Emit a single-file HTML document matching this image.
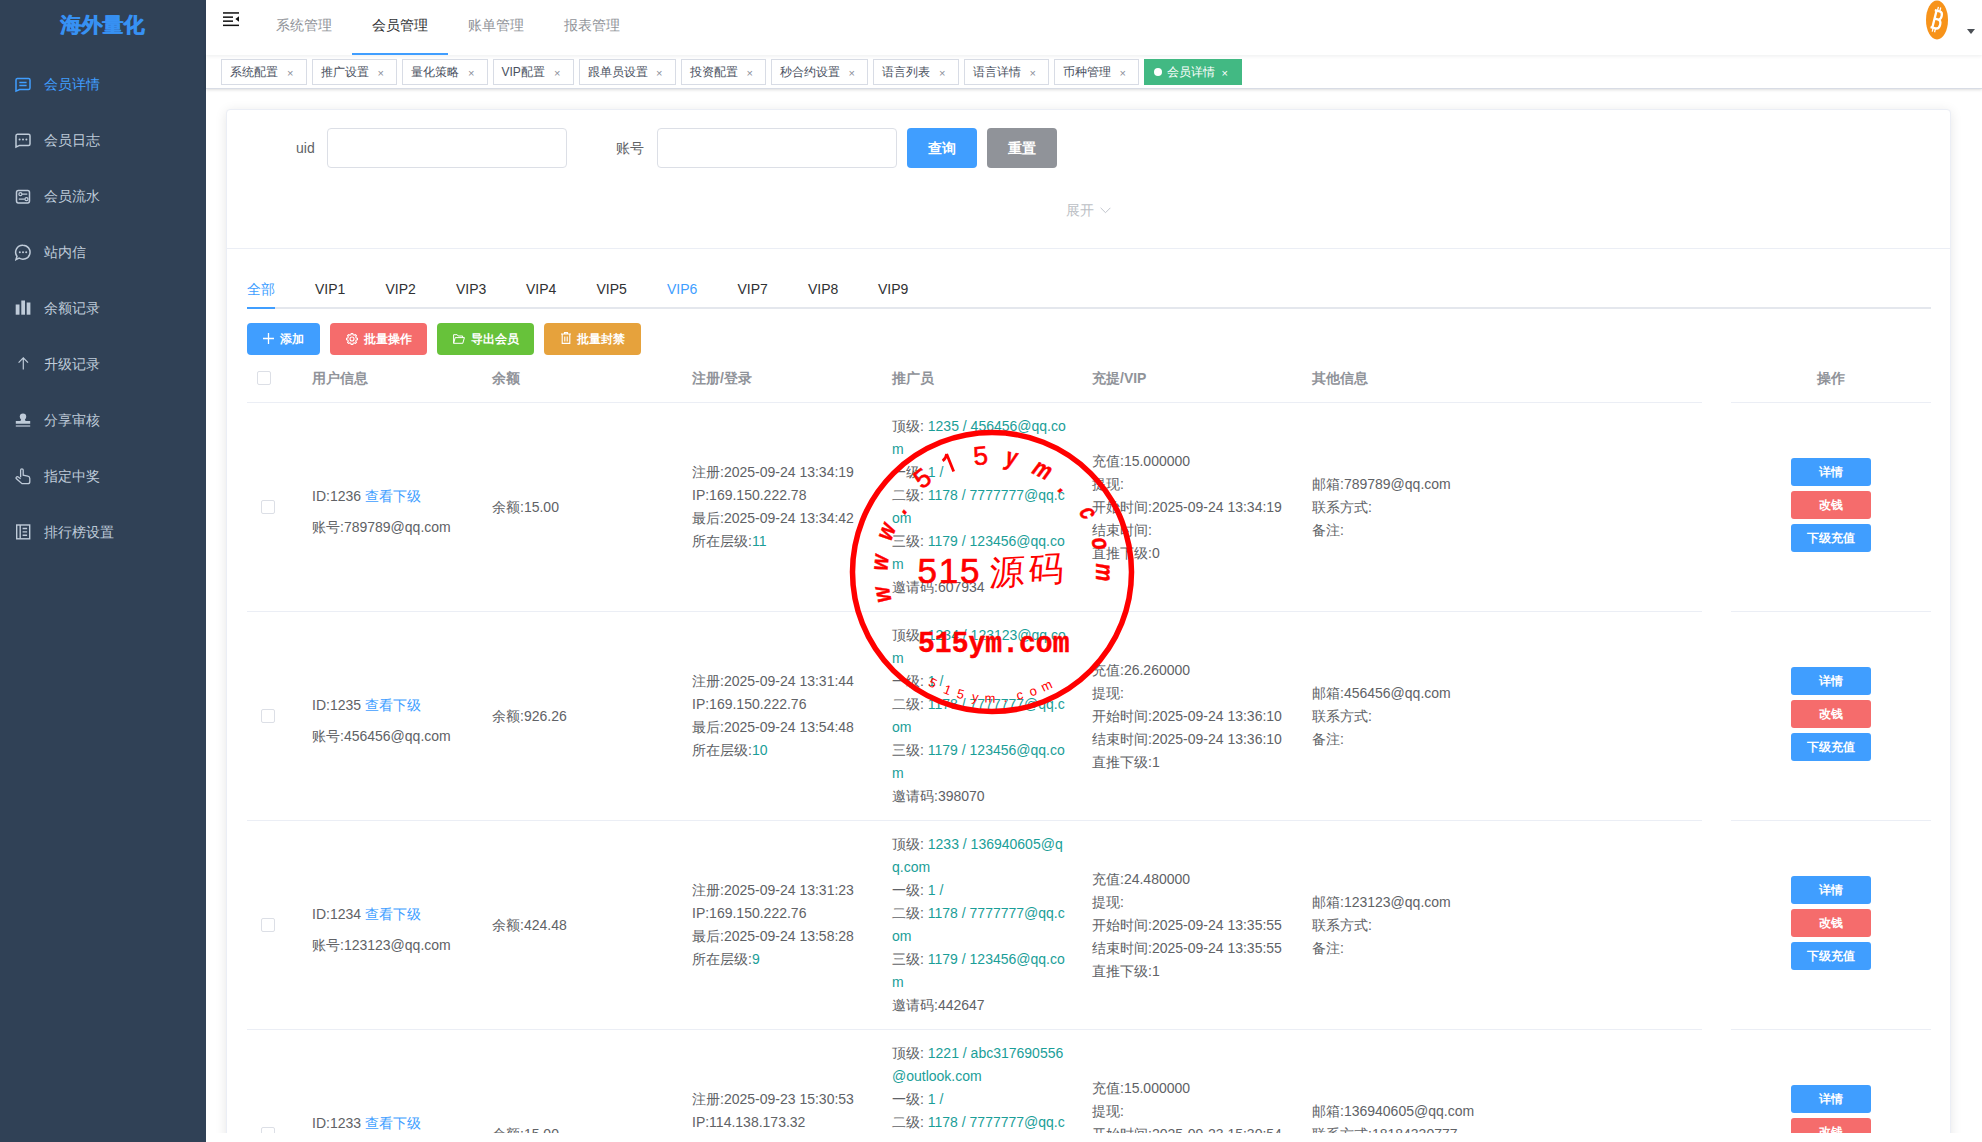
<!DOCTYPE html><html><head><meta charset="utf-8"><style>
*{box-sizing:border-box;margin:0;padding:0}
html,body{width:1982px;height:1142px;overflow:hidden;background:#fff;font-family:"Liberation Sans",sans-serif;color:#606266;font-size:14px}
.abs{position:absolute}
#side{position:absolute;left:0;top:0;width:206px;height:1142px;background:#304156}
.logo{position:absolute;left:-1px;width:206px;top:11px;text-align:center;color:#3791f3;font-size:21px;font-weight:bold;line-height:28px;text-shadow:0.6px 0 0 #3791f3}
.mi{position:absolute;left:0;width:206px;height:56px;color:#bfcbd9;font-size:14px}
.mi .t{position:absolute;left:44px;top:0;line-height:56px;white-space:nowrap}
.mi svg{position:absolute;left:0;top:0}
.mi.act{color:#409EFF}
#hdr{position:absolute;left:206px;top:0;right:0;height:55px;background:#fff;z-index:3;box-shadow:0 1px 4px rgba(0,21,41,.08)}
.nav{position:absolute;top:0;height:55px;line-height:50px;font-size:14px;color:#909399;white-space:nowrap}
.nav.act{color:#303133}
#tags{position:absolute;left:206px;top:55px;right:0;height:34px;background:#fff;border-bottom:1px solid #d8dce5;z-index:2;box-shadow:0 1px 3px 0 rgba(0,0,0,.12),0 0 3px 0 rgba(0,0,0,.04)}
.tag{position:absolute;top:4px;height:26px;line-height:25px;border:1px solid #d8dce5;color:#495060;background:#fff;font-size:12px;padding-left:8px;white-space:nowrap}
.tag .x{position:absolute;top:1px;font-size:11px;color:#8a8f99}
.tag.act{background:#42b983;border-color:#42b983;color:#fff}
.tag.act .x{color:#fff}
#main{position:absolute;left:206px;top:89px;width:1776px;height:1044px;overflow:hidden;background:#fff}
#card{position:absolute;left:20px;top:20px;width:1725px;height:1200px;border:1px solid #ebeef5;border-radius:4px;background:#fff;box-shadow:0 2px 12px 0 rgba(0,0,0,.1)}
.lbl{position:absolute;font-size:14px;color:#606266;line-height:40px;white-space:nowrap}
.inp{position:absolute;height:40px;width:240px;border:1px solid #dcdfe6;border-radius:4px;background:#fff}
.btn{position:absolute;color:#fff;text-align:center;border-radius:4px;white-space:nowrap}
.tab{position:absolute;font-size:14px;color:#303133;line-height:40px;white-space:nowrap}
.th{position:absolute;font-size:14px;font-weight:bold;color:#909399;line-height:23px;white-space:nowrap}
.cell{position:absolute;font-size:14px;color:#606266;line-height:23px;white-space:nowrap}
.tl{color:#1a9e98}
.lk{color:#409EFF}
.hl{position:absolute;height:1px;background:#ebeef5}
.cb{position:absolute;width:14px;height:14px;border:1px solid #dcdfe6;border-radius:2px;background:#fff}
.ob{position:absolute;width:80px;height:28px;line-height:28px;font-size:12px;font-weight:bold;color:#fff;text-align:center;border-radius:3px}
</style></head><body>
<div id="side"><div class="logo">海外量化</div>
<div class="mi act" style="top:56px"><svg width="40" height="56" viewBox="0 0 40 56"><path d="M17.3 22.4h11.2a1.5 1.5 0 0 1 1.5 1.5v8.2a1.5 1.5 0 0 1-1.5 1.5H19.6L16 35.2V23.9a1.5 1.5 0 0 1 1.3-1.5z" fill="none" stroke="currentColor" stroke-width="1.5"/><path d="M19.3 26.4h7.3M19.3 29.6h7.3" stroke="currentColor" stroke-width="1.5"/></svg><span class="t">会员详情</span></div>
<div class="mi" style="top:112px"><svg width="40" height="56" viewBox="0 0 40 56"><path d="M17.3 22.2h11.2a1.5 1.5 0 0 1 1.5 1.5v8.2a1.5 1.5 0 0 1-1.5 1.5H19.6L16 35V23.7a1.5 1.5 0 0 1 1.3-1.5z" fill="none" stroke="currentColor" stroke-width="1.5"/><circle cx="19.6" cy="27.6" r="1" fill="currentColor"/><circle cx="23" cy="27.6" r="1" fill="currentColor"/><circle cx="26.4" cy="27.6" r="1" fill="currentColor"/></svg><span class="t">会员日志</span></div>
<div class="mi" style="top:168px"><svg width="40" height="56" viewBox="0 0 40 56"><rect x="16.5" y="22.6" width="13" height="12.3" rx="1.8" fill="none" stroke="currentColor" stroke-width="1.5"/><circle cx="20.4" cy="26.2" r="1.5" fill="none" stroke="currentColor" stroke-width="1.3"/><path d="M22 26.2h5.3M18.8 31.2h6" stroke="currentColor" stroke-width="1.3"/><circle cx="26.5" cy="31.2" r="1.5" fill="none" stroke="currentColor" stroke-width="1.3"/></svg><span class="t">会员流水</span></div>
<div class="mi" style="top:224px"><svg width="40" height="56" viewBox="0 0 40 56"><path d="M23 21.2a7 7 0 1 1-3.9 12.8L16 35.6l1-3.3A7 7 0 0 1 23 21.2z" fill="none" stroke="currentColor" stroke-width="1.5"/><circle cx="19.8" cy="28.2" r="1" fill="currentColor"/><circle cx="23" cy="28.2" r="1" fill="currentColor"/><circle cx="26.2" cy="28.2" r="1" fill="currentColor"/></svg><span class="t">站内信</span></div>
<div class="mi" style="top:280px"><svg width="40" height="56" viewBox="0 0 40 56"><rect x="15.7" y="24.5" width="3.8" height="10.2" fill="currentColor"/><rect x="21.3" y="20.5" width="3.7" height="14.2" fill="currentColor"/><rect x="26.7" y="22.5" width="3.7" height="12.2" fill="currentColor"/></svg><span class="t">余额记录</span></div>
<div class="mi" style="top:336px"><svg width="40" height="56" viewBox="0 0 40 56"><path d="M23.3 22v11.6M18.6 26.6l4.7-4.7 4.7 4.7" fill="none" stroke="currentColor" stroke-width="1.2"/></svg><span class="t">升级记录</span></div>
<div class="mi" style="top:392px"><svg width="40" height="56" viewBox="0 0 40 56"><circle cx="23" cy="24.6" r="3.2" fill="currentColor"/><path d="M21.3 26.5h3.4l0.8 2.6h4.7v2.7H15.8v-2.7h4.7z" fill="currentColor"/><rect x="15.8" y="33.4" width="14.4" height="1.2" fill="currentColor"/></svg><span class="t">分享审核</span></div>
<div class="mi" style="top:448px"><svg width="40" height="56" viewBox="0 0 40 56"><path d="M20.6 29.2V22.2a1.3 1.3 0 0 1 2.6 0V27.2l4.6 1c1.2.3 2 1.1 2 2.3v3.2a2 2 0 0 1-2 2H22L16.2 30.6a1.3 1.3 0 0 1 1.7-1.8l2.7 1.9" fill="none" stroke="currentColor" stroke-width="1.3"/></svg><span class="t">指定中奖</span></div>
<div class="mi" style="top:504px"><svg width="40" height="56" viewBox="0 0 40 56"><rect x="16.7" y="21" width="13" height="13.8" fill="none" stroke="currentColor" stroke-width="1.4"/><path d="M20.2 21v13.8M22.6 24.5h4.5M22.6 27.9h4.5M22.6 31.3h4.5" stroke="currentColor" stroke-width="1.4"/></svg><span class="t">排行榜设置</span></div>
</div>
<div id="hdr">
<svg class="abs" style="left:17px;top:12px" width="16" height="15" viewBox="0 0 16 15" fill="#111"><rect x="0" y="0.2" width="16" height="1.5"/><rect x="0" y="4.4" width="10" height="1.5"/><rect x="0" y="8.4" width="10" height="1.5"/><rect x="0" y="12.6" width="16" height="1.5"/><path d="M16 4.2v5.6l-3.6-2.8z"/></svg>
<div class="nav" style="left:70px">系统管理</div>
<div class="nav act" style="left:166px">会员管理</div>
<div class="nav" style="left:262px">账单管理</div>
<div class="nav" style="left:358px">报表管理</div>
<div class="abs" style="left:146px;top:53px;width:96px;height:2px;background:#409EFF"></div>
<svg class="abs" style="left:1720px;top:0px" width="22" height="40" viewBox="0 0 22 40"><ellipse cx="11" cy="20" rx="11" ry="19.5" fill="#f7931a"/><g transform="rotate(14 11 20)" fill="none" stroke="#fff"><path d="M6.5 11H11.5Q14.6 11 14.6 15Q14.6 19.3 11.5 19.3H7.5M11.5 19.3Q15.2 19.3 15.2 23.8Q15.2 28.5 11.5 28.5H6.5M8.3 11V28.5" stroke-width="2.3"/><path d="M9.2 7V11M11.6 7V11M9.2 28.5V32.5M11.6 28.5V32.5" stroke-width="1.3"/></g></svg>
<svg class="abs" style="left:1761px;top:29px" width="8" height="5" viewBox="0 0 8 5"><path d="M0 0h8L4 5z" fill="#4b4f55"/></svg>
</div>
<div id="tags">
<div class="tag" style="left:15px;width:85.5px">系统配置<span class="x" style="right:12px">×</span></div>
<div class="tag" style="left:105.5px;width:85.5px">推广设置<span class="x" style="right:12px">×</span></div>
<div class="tag" style="left:196px;width:85.5px">量化策略<span class="x" style="right:12px">×</span></div>
<div class="tag" style="left:286.5px;width:81px">VIP配置<span class="x" style="right:12px">×</span></div>
<div class="tag" style="left:372.5px;width:97px">跟单员设置<span class="x" style="right:12px">×</span></div>
<div class="tag" style="left:474.5px;width:85.5px">投资配置<span class="x" style="right:12px">×</span></div>
<div class="tag" style="left:565px;width:97px">秒合约设置<span class="x" style="right:12px">×</span></div>
<div class="tag" style="left:667px;width:85.5px">语言列表<span class="x" style="right:12px">×</span></div>
<div class="tag" style="left:757.5px;width:85.5px">语言详情<span class="x" style="right:12px">×</span></div>
<div class="tag" style="left:847.5px;width:85.5px">币种管理<span class="x" style="right:12px">×</span></div>
<div class="tag act" style="left:938px;width:98px;padding-left:9px"><span style="display:inline-block;width:8px;height:8px;border-radius:50%;background:#fff;margin-right:5px;vertical-align:0px"></span>会员详情<span class="x" style="right:13px">×</span></div>
</div>
<div id="main">
<div id="card"></div>
<div class="hl" style="left:21px;top:159px;width:1723px"></div>
<div class="lbl" style="left:90px;top:39px">uid</div>
<div class="inp" style="left:121px;top:39px"></div>
<div class="lbl" style="left:410px;top:39px">账号</div>
<div class="inp" style="left:451px;top:39px"></div>
<div class="btn" style="left:701px;top:39px;width:70px;height:40px;line-height:40px;background:#409EFF;font-size:14px;font-weight:bold">查询</div>
<div class="btn" style="left:781px;top:39px;width:70px;height:40px;line-height:40px;background:#909399;font-size:14px;font-weight:bold">重置</div>
<div class="lbl" style="left:860px;top:101px;color:#bcbfc5;font-size:14px">展开<svg style="position:absolute;left:33.5px;top:16.5px" width="11" height="7" viewBox="0 0 11 7"><path d="M0.6 0.8l4.9 4.9 4.9-4.9" fill="none" stroke="#c0c4cc" stroke-width="1"/></svg></div>
<div class="tab" style="left:41px;top:180px;color:#409EFF">全部</div>
<div class="tab" style="left:109px;top:180px;color:#303133">VIP1</div>
<div class="tab" style="left:179.5px;top:180px;color:#303133">VIP2</div>
<div class="tab" style="left:250px;top:180px;color:#303133">VIP3</div>
<div class="tab" style="left:320px;top:180px;color:#303133">VIP4</div>
<div class="tab" style="left:390.5px;top:180px;color:#303133">VIP5</div>
<div class="tab" style="left:461px;top:180px;color:#409EFF">VIP6</div>
<div class="tab" style="left:531.5px;top:180px;color:#303133">VIP7</div>
<div class="tab" style="left:602px;top:180px;color:#303133">VIP8</div>
<div class="tab" style="left:672px;top:180px;color:#303133">VIP9</div>
<div class="abs" style="left:41px;top:218px;width:1684px;height:2px;background:#e4e7ed"></div>
<div class="abs" style="left:41px;top:218px;width:28px;height:2px;background:#409EFF"></div>
<div class="btn" style="left:41px;top:234px;width:73px;height:32px;line-height:32px;background:#409EFF;font-size:12px;font-weight:bold"><svg width="11" height="11" viewBox="0 0 11 11" style="vertical-align:-1px;margin-right:6px"><path d="M5.5 0v11M0 5.5h11" stroke="#fff" stroke-width="1.3"/></svg>添加</div>
<div class="btn" style="left:124px;top:234px;width:97px;height:32px;line-height:32px;background:#F56C6C;font-size:12px;font-weight:bold"><svg width="12" height="12" viewBox="0 0 12 12" style="vertical-align:-1.5px;margin-right:6px"><path d="M10.16 4.93 L11.54 5.21 L11.54 6.79 L10.16 7.07 L9.70 8.19 L10.48 9.36 L9.36 10.48 L8.19 9.70 L7.07 10.16 L6.79 11.54 L5.21 11.54 L4.93 10.16 L3.81 9.70 L2.64 10.48 L1.52 9.36 L2.30 8.19 L1.84 7.07 L0.46 6.79 L0.46 5.21 L1.84 4.93 L2.30 3.81 L1.52 2.64 L2.64 1.52 L3.81 2.30 L4.93 1.84 L5.21 0.46 L6.79 0.46 L7.07 1.84 L8.19 2.30 L9.36 1.52 L10.48 2.64 L9.70 3.81z" fill="none" stroke="#fff" stroke-width="1.1" stroke-linejoin="round"/><circle cx="6" cy="6" r="2" fill="none" stroke="#fff" stroke-width="1.1"/></svg>批量操作</div>
<div class="btn" style="left:231px;top:234px;width:97px;height:32px;line-height:32px;background:#67C23A;font-size:12px;font-weight:bold"><svg width="12" height="10" viewBox="0 0 12 10" style="vertical-align:-1px;margin-right:6px"><path d="M0.6 9.3V0.7h3.6l1 1.3h4.4v1.6M0.6 9.3h9.2l1.6-5.7H2.2L0.6 9.3" fill="none" stroke="#fff" stroke-width="1" stroke-linejoin="round"/></svg>导出会员</div>
<div class="btn" style="left:338px;top:234px;width:97px;height:32px;line-height:32px;background:#E6A23C;font-size:12px;font-weight:bold"><svg width="10" height="12" viewBox="0 0 10 12" style="vertical-align:-1px;margin-right:6px"><path d="M0 2h10M3.5 2V0.6h3V2M1.2 2v9.4h7.6V2M3.8 4.5v5M6.2 4.5v5" fill="none" stroke="#fff" stroke-width="1.1"/></svg>批量封禁</div>
<div class="cb" style="left:51px;top:282px"></div>
<div class="th" style="left:106px;top:277.5px">用户信息</div>
<div class="th" style="left:286px;top:277.5px">余额</div>
<div class="th" style="left:486px;top:277.5px">注册/登录</div>
<div class="th" style="left:686px;top:277.5px">推广员</div>
<div class="th" style="left:886px;top:277.5px">充提/VIP</div>
<div class="th" style="left:1106px;top:277.5px">其他信息</div>
<div class="th" style="left:1525px;width:200px;text-align:center;top:277.5px">操作</div>
<div class="hl" style="left:41px;top:313px;width:1455px"></div>
<div class="hl" style="left:1525px;top:313px;width:200px"></div>
<div class="hl" style="left:41px;top:522px;width:1455px"></div>
<div class="hl" style="left:1525px;top:522px;width:200px"></div>
<div class="cb" style="left:55px;top:411px"></div>
<div class="cell" style="left:106px;top:395.8px">ID:1236 <span class="lk">查看下级</span></div>
<div class="cell" style="left:106px;top:426.70000000000005px">账号:789789@qq.com</div>
<div class="cell" style="left:286px;top:406.5px">余额:15.00</div>
<div class="cell" style="left:486px;top:372.3px">注册:2025-09-24 13:34:19<br>IP:169.150.222.78<br>最后:2025-09-24 13:34:42<br>所在层级:<span class="tl">11</span></div>
<div class="cell" style="left:686px;top:325.5px">顶级: <span class="tl">1235 / 456456@qq.co</span><br><span class="tl">m</span><br>一级: <span class="tl">1 /</span><br>二级: <span class="tl">1178 / 7777777@qq.c</span><br><span class="tl">om</span><br>三级: <span class="tl">1179 / 123456@qq.co</span><br><span class="tl">m</span><br>邀请码:607934</div>
<div class="cell" style="left:886px;top:360.5px">充值:15.000000<br>提现:<br>开始时间:2025-09-24 13:34:19<br>结束时间:<br>直推下级:0</div>
<div class="cell" style="left:1106px;top:383.5px">邮箱:789789@qq.com<br>联系方式:<br>备注:</div>
<div class="ob" style="left:1585px;top:369px;background:#409EFF">详情</div>
<div class="ob" style="left:1585px;top:402px;background:#F56C6C">改钱</div>
<div class="ob" style="left:1585px;top:435px;background:#409EFF">下级充值</div>
<div class="hl" style="left:41px;top:731px;width:1455px"></div>
<div class="hl" style="left:1525px;top:731px;width:200px"></div>
<div class="cb" style="left:55px;top:620px"></div>
<div class="cell" style="left:106px;top:604.8px">ID:1235 <span class="lk">查看下级</span></div>
<div class="cell" style="left:106px;top:635.7px">账号:456456@qq.com</div>
<div class="cell" style="left:286px;top:615.5px">余额:926.26</div>
<div class="cell" style="left:486px;top:581.3px">注册:2025-09-24 13:31:44<br>IP:169.150.222.76<br>最后:2025-09-24 13:54:48<br>所在层级:<span class="tl">10</span></div>
<div class="cell" style="left:686px;top:534.5px">顶级: <span class="tl">1234 / 123123@qq.co</span><br><span class="tl">m</span><br>一级: <span class="tl">1 /</span><br>二级: <span class="tl">1178 / 7777777@qq.c</span><br><span class="tl">om</span><br>三级: <span class="tl">1179 / 123456@qq.co</span><br><span class="tl">m</span><br>邀请码:398070</div>
<div class="cell" style="left:886px;top:569.5px">充值:26.260000<br>提现:<br>开始时间:2025-09-24 13:36:10<br>结束时间:2025-09-24 13:36:10<br>直推下级:1</div>
<div class="cell" style="left:1106px;top:592.5px">邮箱:456456@qq.com<br>联系方式:<br>备注:</div>
<div class="ob" style="left:1585px;top:578px;background:#409EFF">详情</div>
<div class="ob" style="left:1585px;top:611px;background:#F56C6C">改钱</div>
<div class="ob" style="left:1585px;top:644px;background:#409EFF">下级充值</div>
<div class="hl" style="left:41px;top:940px;width:1455px"></div>
<div class="hl" style="left:1525px;top:940px;width:200px"></div>
<div class="cb" style="left:55px;top:829px"></div>
<div class="cell" style="left:106px;top:813.8px">ID:1234 <span class="lk">查看下级</span></div>
<div class="cell" style="left:106px;top:844.7px">账号:123123@qq.com</div>
<div class="cell" style="left:286px;top:824.5px">余额:424.48</div>
<div class="cell" style="left:486px;top:790.3px">注册:2025-09-24 13:31:23<br>IP:169.150.222.76<br>最后:2025-09-24 13:58:28<br>所在层级:<span class="tl">9</span></div>
<div class="cell" style="left:686px;top:743.5px">顶级: <span class="tl">1233 / 136940605@q</span><br><span class="tl">q.com</span><br>一级: <span class="tl">1 /</span><br>二级: <span class="tl">1178 / 7777777@qq.c</span><br><span class="tl">om</span><br>三级: <span class="tl">1179 / 123456@qq.co</span><br><span class="tl">m</span><br>邀请码:442647</div>
<div class="cell" style="left:886px;top:778.5px">充值:24.480000<br>提现:<br>开始时间:2025-09-24 13:35:55<br>结束时间:2025-09-24 13:35:55<br>直推下级:1</div>
<div class="cell" style="left:1106px;top:801.5px">邮箱:123123@qq.com<br>联系方式:<br>备注:</div>
<div class="ob" style="left:1585px;top:787px;background:#409EFF">详情</div>
<div class="ob" style="left:1585px;top:820px;background:#F56C6C">改钱</div>
<div class="ob" style="left:1585px;top:853px;background:#409EFF">下级充值</div>
<div class="hl" style="left:41px;top:1149px;width:1455px"></div>
<div class="hl" style="left:1525px;top:1149px;width:200px"></div>
<div class="cb" style="left:55px;top:1038px"></div>
<div class="cell" style="left:106px;top:1022.8px">ID:1233 <span class="lk">查看下级</span></div>
<div class="cell" style="left:106px;top:1053.7px">账号:136940605@qq.com</div>
<div class="cell" style="left:286px;top:1033.5px">余额:15.00</div>
<div class="cell" style="left:486px;top:999.3px">注册:2025-09-23 15:30:53<br>IP:114.138.173.32<br>最后:2025-09-23 15:31:20<br>所在层级:<span class="tl">12</span></div>
<div class="cell" style="left:686px;top:952.5px">顶级: <span class="tl">1221 / abc317690556</span><br><span class="tl">@outlook.com</span><br>一级: <span class="tl">1 /</span><br>二级: <span class="tl">1178 / 7777777@qq.c</span><br><span class="tl">om</span><br>三级: <span class="tl">1179 / 123456@qq.co</span><br><span class="tl">m</span><br>邀请码:512345</div>
<div class="cell" style="left:886px;top:987.5px">充值:15.000000<br>提现:<br>开始时间:2025-09-23 15:30:54<br>结束时间:2025-09-23 15:30:54<br>直推下级:0</div>
<div class="cell" style="left:1106px;top:1010.5px">邮箱:136940605@qq.com<br>联系方式:18184330777<br>备注:</div>
<div class="ob" style="left:1585px;top:996px;background:#409EFF">详情</div>
<div class="ob" style="left:1585px;top:1029px;background:#F56C6C">改钱</div>
<div class="ob" style="left:1585px;top:1062px;background:#409EFF">下级充值</div>
<svg class="abs" style="left:635.5px;top:332.5px" width="300" height="300" viewBox="0 0 300 300">
<circle cx="150" cy="150" r="139.5" fill="none" stroke="#f00" stroke-width="5.5"/>
<text x="0" y="0" transform="translate(39.3 172.5) rotate(-101.5) scale(0.8 1) skewX(-12)" text-anchor="middle" dominant-baseline="central" font-family="Liberation Sans" font-weight="bold" font-size="25" fill="#f00" stroke="#f00" stroke-width="0.5">w</text>
<text x="0" y="0" transform="translate(37.4 140.2) rotate(-85.0) scale(0.8 1) skewX(-12)" text-anchor="middle" dominant-baseline="central" font-family="Liberation Sans" font-weight="bold" font-size="25" fill="#f00" stroke="#f00" stroke-width="0.5">w</text>
<text x="0" y="0" transform="translate(43.6 109.0) rotate(-68.9) scale(0.8 1) skewX(-12)" text-anchor="middle" dominant-baseline="central" font-family="Liberation Sans" font-weight="bold" font-size="25" fill="#f00" stroke="#f00" stroke-width="0.5">w</text>
<text x="0" y="0" transform="translate(57.4 85.2) rotate(-55.0) scale(0.8 1) skewX(-12)" text-anchor="middle" dominant-baseline="central" font-family="Liberation Sans" font-weight="bold" font-size="25" fill="#f00" stroke="#f00" stroke-width="0.5">.</text>
<text x="0" y="0" transform="translate(80.1 56.2) rotate(-36.7)" text-anchor="middle" dominant-baseline="central" font-family="Liberation Sans" font-size="26" fill="#f00" stroke="#f00" stroke-width="0.6">5</text>
<path transform="translate(106.5 41.4) rotate(-21.8)" d="M1.8 -9.5V9.5M1.8 -9.5Q-0.5 -5.5 -4.5 -4.5" fill="none" stroke="#f00" stroke-width="2.8"/>
<text x="0" y="0" transform="translate(138.6 33.6) rotate(-5.6)" text-anchor="middle" dominant-baseline="central" font-family="Liberation Sans" font-size="26" fill="#f00" stroke="#f00" stroke-width="0.6">5</text>
<text x="0" y="0" transform="translate(169.9 34.7) rotate(9.8) scale(0.8 1) skewX(-12)" text-anchor="middle" dominant-baseline="central" font-family="Liberation Sans" font-weight="bold" font-size="25" fill="#f00" stroke="#f00" stroke-width="0.5">y</text>
<text x="0" y="0" transform="translate(201.1 47.0) rotate(26.4) scale(0.8 1) skewX(-12)" text-anchor="middle" dominant-baseline="central" font-family="Liberation Sans" font-weight="bold" font-size="25" fill="#f00" stroke="#f00" stroke-width="0.5">m</text>
<text x="0" y="0" transform="translate(223.4 64.1) rotate(40.5) scale(0.8 1) skewX(-12)" text-anchor="middle" dominant-baseline="central" font-family="Liberation Sans" font-weight="bold" font-size="25" fill="#f00" stroke="#f00" stroke-width="0.5">.</text>
<text x="0" y="0" transform="translate(247.2 90.4) rotate(58.5) scale(0.8 1) skewX(-12)" text-anchor="middle" dominant-baseline="central" font-family="Liberation Sans" font-weight="bold" font-size="25" fill="#f00" stroke="#f00" stroke-width="0.5">c</text>
<text x="0" y="0" transform="translate(259.3 121.3) rotate(75.3) scale(0.8 1) skewX(-12)" text-anchor="middle" dominant-baseline="central" font-family="Liberation Sans" font-weight="bold" font-size="25" fill="#f00" stroke="#f00" stroke-width="0.5">o</text>
<text x="0" y="0" transform="translate(263.0 150.6) rotate(90.3) scale(0.8 1) skewX(-12)" text-anchor="middle" dominant-baseline="central" font-family="Liberation Sans" font-weight="bold" font-size="25" fill="#f00" stroke="#f00" stroke-width="0.5">m</text>
<text x="75.60000000000002" y="161.0" font-family="Liberation Sans" font-size="35" letter-spacing="1.8" fill="#f00" stroke="#f00" stroke-width="0.7">515</text>
<text x="0" y="0" transform="translate(146.5 162.5) skewX(-6) rotate(-3)" font-family="Liberation Sans" font-size="35" letter-spacing="4" fill="#f00">源码</text>
<text x="76.0" y="229.5" font-family="Liberation Mono" font-weight="bold" font-size="30" textLength="151.5" lengthAdjust="spacingAndGlyphs" fill="#f00" stroke="#f00" stroke-width="0.5">515ym.com</text>
<text x="0" y="0" transform="translate(90.7 261.1) rotate(28.1)" text-anchor="middle" dominant-baseline="central" font-family="Liberation Sans" font-size="13" fill="#f00">5</text>
<text x="0" y="0" transform="translate(105.5 267.9) rotate(20.7)" text-anchor="middle" dominant-baseline="central" font-family="Liberation Sans" font-size="13" fill="#f00">1</text>
<text x="0" y="0" transform="translate(118.5 272.0) rotate(14.5)" text-anchor="middle" dominant-baseline="central" font-family="Liberation Sans" font-size="13" fill="#f00">5</text>
<text x="0" y="0" transform="translate(133.3 274.9) rotate(7.6)" text-anchor="middle" dominant-baseline="central" font-family="Liberation Sans" font-size="13" fill="#f00">y</text>
<text x="0" y="0" transform="translate(148.0 276.0) rotate(0.9)" text-anchor="middle" dominant-baseline="central" font-family="Liberation Sans" font-size="13" fill="#f00">m</text>
<text x="0" y="0" transform="translate(163.2 275.3) rotate(-6.0)" text-anchor="middle" dominant-baseline="central" font-family="Liberation Sans" font-size="13" fill="#f00">.</text>
<text x="0" y="0" transform="translate(177.7 272.9) rotate(-12.7)" text-anchor="middle" dominant-baseline="central" font-family="Liberation Sans" font-size="13" fill="#f00">c</text>
<text x="0" y="0" transform="translate(191.0 269.1) rotate(-19.0)" text-anchor="middle" dominant-baseline="central" font-family="Liberation Sans" font-size="13" fill="#f00">o</text>
<text x="0" y="0" transform="translate(204.4 263.6) rotate(-25.6)" text-anchor="middle" dominant-baseline="central" font-family="Liberation Sans" font-size="13" fill="#f00">m</text>
</svg>
</div>
</body></html>
